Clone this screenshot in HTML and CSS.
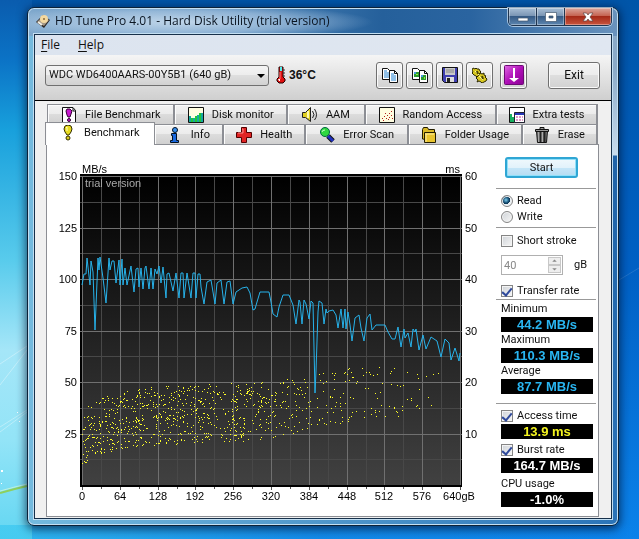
FILE: index.html
```html
<!DOCTYPE html>
<html lang="en">
<head>
<meta charset="utf-8">
<title>HD Tune Pro 4.01 - Hard Disk Utility (trial version)</title>
<link rel="stylesheet" href="styles.css">
</head>
<body>
<svg class="wallpaper" viewBox="0 0 639 539" preserveAspectRatio="none" aria-hidden="true">
  <path d="M0 385L27 350M0 364L27 346M0 427L27 410M0 432L27 412" stroke="#fff" stroke-opacity=".35" fill="none"/>
  <path d="M0 493Q14 489 27 486" stroke="#8ed05c" stroke-width="2" fill="none"/>
  <path d="M0 491Q14 487 27 484" stroke="#e9ffd0" stroke-opacity=".6" fill="none"/>
  <path d="M1 470h2v2h-2zM17 412h1v1h-1zM1 483h1v1h-1zM19 421h1v1h-1z" fill="#fff"/>
  <path d="M619 280L639 268" stroke="#fff" stroke-opacity=".12" fill="none"/>
</svg>
<main class="window">
  <header class="titlebar">
    <svg class="app-icon" width="16" height="16" viewBox="0 0 16 16"><path d="M1 9L8 2l7 5-6 8z" fill="#2b2622"/><path d="M2 9l6-6 6 4-5 6z" fill="#a39787"/><ellipse cx="9" cy="6" rx="4" ry="4" fill="#f4d9a0"/><ellipse cx="9" cy="6" rx="1" ry="1" fill="#8a6a38"/><path d="M3 9l4 3" stroke="#f3eee2" stroke-width="2"/></svg>
    <h1>HD Tune Pro 4.01 - Hard Disk Utility (trial version)</h1>
    <div class="caption">
      <button aria-label="Minimize"><svg width="12" height="12" viewBox="0 0 12 12"><path d="M1 7h10v3H1z" fill="#fff" stroke="#44576e" stroke-width=".7"/></svg></button>
      <button aria-label="Maximize"><svg width="12" height="12" viewBox="0 0 12 12"><path d="M.5 1.500h11v9H.5zM4 5v2h4V5z" fill="#fff" fill-rule="evenodd" stroke="#44576e" stroke-width=".7"/></svg></button>
      <button class="close" aria-label="Close"><svg width="12" height="12" viewBox="0 0 12 12"><path d="M1 2h3.500L6 4l1.500-2H11L8 6l3 4H7.500L6 8l-1.500 2H1l3-4z" fill="#fff" stroke="#5b4545" stroke-width=".7"/></svg></button>
    </div>
  </header>
  <div class="client">
    <nav class="menubar"><button><u>F</u>ile</button><button><u>H</u>elp</button></nav>
    <div class="toolbar">
      <div class="drive">
        <select aria-label="Drive"><option>WDC WD6400AARS-00Y5B1 (640 gB)</option></select>
        <svg class="arrow" width="8" height="4" viewBox="0 0 8 4"><path d="M0 0h8L4 4z"/></svg>
      </div>
      <svg class="thermo" width="10" height="18" viewBox="0 0 10 18"><path d="M3 1h4v10l2 2v2l-2 2H3l-2-2v-2l2-2z" fill="#e01010" stroke="#200" /><path d="M4 1h2v4H4z" fill="#5ee"/><path d="M4 6v7" stroke="#ff8080"/><path d="M2 13h2v2H3z" fill="#fff"/><path d="M7 4h2M7 7h2M7 10h2" stroke="#333"/></svg>
      <output class="temp">36°C</output>
      <div class="tools">
        <button aria-label="Copy text"><svg width="16" height="16" viewBox="0 0 16 16"><g stroke="#111" fill="#fff"><path d="M.5 1.500h5l3 3v8h-8z"/><path d="M7.500 3.500h5l3 3v9h-8z"/><path d="M12.500 3.500v3h3" fill="none"/></g><path d="M2 4h3M2 6h5M2 8h5M2 10h5M9 7h3M9 9h5M9 11h5M9 13h5" stroke="#2080d0"/></svg></button>
        <button aria-label="Copy image"><svg width="16" height="16" viewBox="0 0 16 16"><g stroke="#111" fill="#fff"><path d="M.5 1.500h5l3 3v8h-8z"/><path d="M7.500 3.500h5l3 3v9h-8z"/><path d="M12.500 3.500v3h3" fill="none"/></g><path d="M2 5h5v5H2zM9 8h5v5H9z" fill="#2a9a30"/><path d="M2 5h2v2H2zM9 8h2v2H9z" fill="#4c9be0"/><path d="M4 7h2v1H4zM12 10h1v2h-1z" fill="#9e4"/></svg></button>
        <button aria-label="Save"><svg width="16" height="16" viewBox="0 0 16 16"><path d="M.5.5h15v15h-13l-2-2z" fill="#3f3fb0" stroke="#111"/><path d="M3 1h10v7H3z" fill="#c9c9c9"/><path d="M4 3h8M4 5h8" stroke="#888"/><path d="M4 10h8v5H4z" fill="#ddd"/><path d="M5 11h3v4H5z" fill="#222"/></svg></button>
        <button aria-label="Options"><svg width="16" height="16" viewBox="0 0 16 16"><g fill="#d8c820" stroke="#2b2700"><path d="M1 1l2 1 1-1 1 1h2l1 2 1 1-1 1v2l-2 1-1 1-1-1-2-1-2-2 1-1-1-2z"/><path d="M8 6l2 1 2-1v2l2 1-1 1 2 2-1 2-2 1-2 1-1-1-2-1-2 1 1-2-2-2 2-2z"/></g><path d="M3 4l4 4M7 9l4 4" stroke="#fff8a0" fill="none"/><path d="M5 4l1 3M10 9l1 3" stroke="#4c4500" stroke-width="2"/></svg></button>
        <button class="down" aria-label="Download"><svg width="20" height="20" viewBox="0 0 20 20"><defs><linearGradient id="mag" x1="0" y1="0" x2="1" y2="1"><stop offset="0" stop-color="#e06ae4"/><stop offset=".5" stop-color="#b010b8"/><stop offset="1" stop-color="#8a0094"/></linearGradient></defs><rect x=".5" y=".5" width="19" height="19" rx="1" fill="url(#mag)" stroke="#6c0a74"/><path d="M9 3h2v10h4l-5 4-5-4h4z" fill="#fff"/></svg></button>
      </div>
      <button class="exit">Exit</button>
    </div>
    <div class="content">
      <nav class="tabs back" aria-label="More pages">
        <button class="t-file"><svg viewBox="0 0 16 16"><path d="M1.500.5H12l2.500 3v12h-13z" fill="#fff" stroke="#111"/><path d="M12 1v3h3" fill="none" stroke="#111"/><path d="M5 4l1-2h3l2 2-1 3-1 3H7L6 8z" fill="#c818d0" stroke="#303"/><circle cx="8" cy="13" r="1.500" fill="#c818d0" stroke="#303"/></svg>File Benchmark</button>
        <button class="t-disk"><svg viewBox="0 0 16 16"><path d="M.5.5h15v15H.5z" fill="#fffde0" stroke="#111"/><path d="M1 9h2v6H1zM5 11h2v4H5zM9 8h2v7H9zM13 6h2v9h-2z" fill="#18a8a0"/><path d="M3 11h2v4H3zM7 9h2v6H7zM11 6h2v9h-2z" fill="#20c838"/></svg>Disk monitor</button>
        <button class="t-aam"><svg viewBox="0 0 16 16"><path d="M.5 5.500h3L8.500.5v14l-5-4h-3z" fill="#e0cf20" stroke="#222"/><path d="M6 4v7" stroke="#fffab0" stroke-width="2"/><path d="M10.500 4q3 4 0 7M12.500 2q4 6 0 11" fill="none" stroke="#222"/></svg>AAM</button>
        <button class="t-random"><svg viewBox="0 0 16 16"><path d="M.5.5h15v15H.5z" fill="#fffde0" stroke="#111"/><path d="M3 11h1v1H3zM5 9h1v1H5zM4 13h1v1H4zM7 11h1v1H7zM8 8h1v1H8zM10 6h1v1h-1zM12 4h1v1h-1zM10 10h1v1h-1zM12 8h1v1h-1zM13 11h1v1h-1zM6 6h1v1H6zM9 12h1v1H9z" fill="#b02020"/></svg>Random Access</button>
        <button class="t-extra"><svg viewBox="0 0 16 16"><path d="M.5.5h15v15H.5z" fill="#fff" stroke="#111"/><path d="M1 7h2v8H1zM3 10h3v5H3z" fill="#18b060"/><path d="M5.500 5.500h10v10h-10z" fill="#fff" stroke="#223"/><path d="M6 6h9v2H6z" fill="#2838b8"/><path d="M7 10h2M10 10h2M13 10h1M7 13h2M10 13h2M13 13h1" stroke="#c03090"/></svg>Extra tests</button>
      </nav>
      <nav class="tabs front" aria-label="Pages">
        <button class="t-bench active" aria-current="page"><svg viewBox="0 0 16 16"><path d="M5 1l3-1 3 1 1 3-1 3-2 3H7L5 7 4 4z" fill="#e8dc20" stroke="#332e00"/><path d="M6 3l1-1v4" stroke="#fffcc0" fill="none"/><circle cx="8" cy="13" r="2" fill="#d8ca20" stroke="#332e00"/></svg>Benchmark</button>
        <button class="t-info"><svg viewBox="0 0 16 16"><circle cx="8" cy="3" r="2.500" fill="#3890f0" stroke="#012"/><path d="M4.500 6.500h5v7h2v2h-8v-2h2v-5h-1z" fill="#1868e0" stroke="#012"/></svg>Info</button>
        <button class="t-health"><svg viewBox="0 0 16 16"><path d="M5.500.5h5v5h5v5h-5v5h-5v-5h-5v-5h5z" fill="#e02424" stroke="#500"/><path d="M6 2h1v4H2" stroke="#ff9090" fill="none"/></svg>Health</button>
        <button class="t-error"><svg viewBox="0 0 16 16"><path d="M9 9l5 5" stroke="#111" stroke-width="5"/><path d="M9 9l5 5" stroke="#2030c0" stroke-width="3"/><circle cx="6" cy="5" r="4.500" fill="#30d840" stroke="#064"/><path d="M3 5q0-2 3-2" stroke="#c8ffc8" fill="none"/></svg>Error Scan</button>
        <button class="t-folder"><svg viewBox="0 0 16 16"><path d="M1.500 12V2.500l1-2h4l1 2h6v11z" fill="#d8b828" stroke="#221c00"/><path d="M3.500 5.500h11v10h-11z" fill="#e8c430" stroke="#221c00"/><path d="M4 7h9M5 7v8" stroke="#fff0a0"/></svg>Folder Usage</button>
        <button class="t-erase"><svg viewBox="0 0 16 16"><path d="M2.500 4h11l-1 11.500h-9z" fill="#777" stroke="#111"/><path d="M5 5v10M8 5v10" stroke="#ddd"/><path d="M6.500 5v10M10.500 5v10" stroke="#222" stroke-width="2"/><path d="M1.500 2.500h13v2h-13zM6 2V.5h4V2" fill="#999" stroke="#111"/></svg>Erase</button>
      </nav>
      <section class="panel">
        <svg class="chart" viewBox="47 160 449 350" role="img" aria-label="Transfer rate and access time by position">
          <defs><linearGradient id="plot" x1="0" y1="0" x2="0" y2="1"><stop offset="0" stop-color="#000"/><stop offset="1" stop-color="#414141"/></linearGradient></defs>
          <path d="M80 174h382v313H80z"/>
          <path d="M83 177h378v308H83z" fill="url(#plot)"/>
          <g id="grid" shape-rendering="crispEdges"></g>
          <path id="dots" fill="#ffff28" shape-rendering="crispEdges"/>
          <polyline class="rate" points="82,285 84,274 86,274 87,258 90,285 91,261 93,272 95,330 98,258 99,270 100,257 103,278 106,303 109,258 110,270 112,261 114,261 116,283 119,260 120,285 122,259 123,285 125,268 127,285 131,266 134,292 136,269 138,268 139,287 141,268 143,289 145,268 146,266 149,289 151,268 153,289 155,269 157,274 159,266 161,283 163,267 166,298 167,274 169,273 173,291 176,273 179,298 181,273 183,273 184,298 187,273 191,298 193,273 195,273 196,298 198,274 200,274 201,287 204,304 207,282 211,280 215,304 217,283 221,280 224,304 227,282 230,281 233,304 236,292 242,288 247,287 250,293 253,310 255,309 257,302 260,292 269,292 271,302 273,314 277,317 279,307 283,295 289,295 293,305 296,324 299,300 300,302 302,324 304,300 306,304 309,319 311,301 313,303 315,393 316,371 318,312 319,301 322,303 324,324 326,309 327,313 329,311 333,310 336,315 338,328 341,309 343,328 345,309 346,329 348,312 350,325 352,341 355,318 359,315 361,328 364,341 367,318 370,314 372,330 376,325 385,325 388,332 392,339 395,339 398,327 401,347 404,329 405,338 408,333 411,347 413,329 415,332 416,329 419,350 423,335 426,349 431,337 437,341 441,357 445,339 449,343 451,360 455,348 459,361 460,353"/>
          <text class="mark" x="85" y="187">trial version</text>
          <text x="82" y="173">MB/s</text>
          <text x="460" y="173" text-anchor="end">ms</text>
          <g id="labels"></g>
        </svg>
        <form class="side">
          <button class="start" type="button">Start</button>
          <fieldset class="modes">
            <label class="check"><input type="radio" name="mode" checked>Read</label>
            <label class="check"><input type="radio" name="mode">Write</label>
          </fieldset>
          <div class="options">
            <label class="check"><input type="checkbox">Short stroke</label>
            <div class="size">
              <input id="size" type="text" value="40" disabled>
              <span class="spin"><svg viewBox="0 0 14 8"><path d="M4 5h6L7 2z"/></svg><svg viewBox="0 0 14 8"><path d="M4 3h6L7 6z"/></svg></span>
              <label for="size">gB</label>
            </div>
            <label class="check"><input type="checkbox" checked>Transfer rate</label>
          </div>
          <div class="results">
            <label for="min">Minimum</label><output id="min">44.2 MB/s</output>
            <label for="max">Maximum</label><output id="max">110.3 MB/s</output>
            <label for="avg">Average</label><output id="avg">87.7 MB/s</output>
          </div>
          <div class="results extra">
            <label class="check"><input type="checkbox" checked>Access time</label><output class="access">13.9 ms</output>
            <label class="check"><input type="checkbox" checked>Burst rate</label><output class="plain">164.7 MB/s</output>
            <label for="cpu">CPU usage</label><output id="cpu" class="plain">-1.0%</output>
          </div>
        </form>
      </section>
    </div>
  </div>
</main>
<script src="chart.js"></script>
</body>
</html>
```
FILE: styles.css
```css
* { box-sizing: border-box; }
body {
  margin: 0;
  min-height: 100vh;
  padding: 7px 20px 13px 27px;
  font: 12px/16px "Liberation Sans", sans-serif;
  color: #111;
  background:
    linear-gradient(90deg, rgba(60, 200, 240, .75), rgba(30, 150, 230, .4) 50%, transparent) 0 100% / 100% 14px no-repeat,
    linear-gradient(180deg, #0a5cae 0, #0b73c6 60px, #18a0dc 130px, #58cbec 260px, #a5e6f8 350px, #93e4f7 440px, #62d6f2 100%) 0 0 / 32px 100% no-repeat,
    linear-gradient(180deg, #0055a8, #0060c4 50%, #0b82ea);
  background-attachment: fixed;
}
.wallpaper { position: fixed; inset: 0; width: 100%; height: 100%; z-index: -1; }
button { font: inherit; color: inherit; margin: 0; padding: 0; border: 0; background: none; }
fieldset { margin: 0; padding: 0; border: 0; min-width: 0; }

.window {
  display: flex;
  flex-direction: column;
  border: 1px solid #0c2238;
  border-radius: 7px;
  padding: 0 6px 6px;
  box-shadow: inset 0 0 0 1px #c3dff2, 0 2px 10px 1px rgba(0, 15, 45, .7);
  background:
    radial-gradient(ellipse 190px 18px at 155px 14px, rgba(225, 237, 248, .75), rgba(200, 220, 240, .5) 60%, transparent) 0 0 / 100% 28px no-repeat,
    linear-gradient(90deg, #7fa8cc, #4f86b8 35%, #25609b 60%, #2a64a0 75%, #6a93bd) 0 0 / 100% 28px no-repeat,
    linear-gradient(180deg, #8aaac8 0 60px, #c8dced 147px, #1f63a8 148px, #2b74b8) 100% 0 / 8px 100% no-repeat,
    linear-gradient(90deg, #74bade, #2b74b8);
}
.titlebar { display: flex; align-items: center; height: 26px; }
.app-icon { flex: none; margin-right: 4px; margin-left: 1px; }
.titlebar h1 {
  flex: 1;
  margin: 0;
  font: 12px/16px "Open Sans", sans-serif;
  color: #0a1522;
  white-space: nowrap;
}
.caption {
  display: flex;
  align-self: flex-start;
  height: 18px;
  border: 1px solid #20354f;
  border-top: 0;
  border-radius: 0 0 5px 5px;
  overflow: hidden;
  box-shadow: 0 0 0 1px rgba(210, 228, 245, .7);
}
.caption button {
  display: grid;
  place-items: center;
  width: 28px;
  border-right: 1px solid #20354f;
  background: linear-gradient(#a9bfd6, #7893b2 48%, #365b86 50%, #5d86b0);
  box-shadow: inset 0 0 0 1px rgba(255, 255, 255, .35);
}
.caption .close {
  width: 46px;
  border: 0;
  background: linear-gradient(#dba79c, #c4604e 48%, #a52a18 50%, #c9553e);
}

.client {
  flex: 1;
  display: flex;
  flex-direction: column;
  border: 1px solid #17304a;
  box-shadow: 0 0 0 1px #c3dff2;
  background: #f0f0f0;
}
.menubar {
  display: flex;
  gap: 18px;
  height: 20px;
  padding-left: 6px;
  background: linear-gradient(90deg, #dce4ef, #e0e7f1);
  font: 12px/20px "Open Sans", sans-serif;
}
.menubar u { text-underline-offset: 2px; }
.toolbar {
  display: flex;
  align-items: center;
  height: 46px;
  padding: 0 11px 5px 10px;
  border-bottom: 1px solid #000;
  background: linear-gradient(#f5f5f5, #cfcfcf);
}
.drive { position: relative; }
.drive select {
  appearance: none;
  width: 224px;
  height: 21px;
  padding: 0 20px 0 3px;
  border: 1px solid #707070;
  border-radius: 3px;
  font: 11px/16px Roboto, sans-serif;
  color: #111;
  background: linear-gradient(#f4f4f4, #ececec 50%, #dedede 50%, #d2d2d2);
}
.arrow { position: absolute; right: 4px; top: 9px; pointer-events: none; }
.thermo { margin: 0 3px 0 7px; }
.temp { font-weight: bold; font-size: 12px; }
.tools { display: flex; gap: 3px; margin-left: auto; }
.tools button, .exit {
  display: grid;
  place-items: center;
  width: 27px;
  height: 27px;
  border: 1px solid #707070;
  border-radius: 3px;
  background: linear-gradient(#f4f4f4, #ececec 50%, #dedede 50%, #d2d2d2);
  box-shadow: inset 0 0 0 1px #fafafa;
}
.tools .down { margin-left: 4px; }
.exit { width: 52px; margin-left: 21px; font: 12px/16px Roboto, sans-serif; }

.content { flex: 1; padding: 3px 12px 1px 11px; font: 11px/16px Roboto, sans-serif; }
.tabs { display: flex; height: 20px; padding: 0 1px; }
.tabs button {
  display: flex;
  align-items: center;
  justify-content: center;
  gap: 8px;
  min-width: 0;
  white-space: nowrap;
  border: solid #8c8e94;
  border-width: 1px 2px 0 0;
  background: linear-gradient(#f2f2f2, #ebebeb 50%, #dcdcdc 50%, #d0d0d0);
  box-shadow: inset 1px 1px 0 #fcfcfc;
}
.tabs button:first-child { border-left-width: 1px; }
.tabs svg { flex: none; width: 16px; height: 16px; }
.t-file { flex: 128; }
.t-disk { flex: 113; }
.t-aam { flex: 77; }
.t-random { flex: 132; }
.t-extra { flex: 101; }
.t-bench { flex: 110; }
.t-info { flex: 69; }
.t-health { flex: 82; }
.t-error { flex: 103; }
.t-folder { flex: 114; }
.t-erase { flex: 75; }
.tabs .active {
  align-self: flex-end;
  height: 23px;
  margin: 0 0 -1px -2px;
  padding-bottom: 3px;
  border-right-width: 1px;
  background: #fff;
  z-index: 1;
}

.panel {
  display: flex;
  align-items: flex-start;
  border: 1px solid #8c8e94;
  background: #fff;
}
.chart { flex: 1; min-width: 0; margin-top: 15px; font: 11px "Liberation Sans", sans-serif; }
.chart .mark { fill: #a8a8a8; }
.rate { fill: none; stroke: #27b2ea; stroke-width: 1; }
.side { width: 102px; padding: 12px 2px 9px 0; }
.start {
  display: block;
  width: 73px;
  height: 21px;
  margin: 0 0 10px 9px;
  border: 2px solid #2fa6d4;
  border-radius: 3px;
  background: linear-gradient(#f0f8fc, #e2f2fb 50%, #c6e6f8 50%, #b6dcf2);
  box-shadow: inset 0 0 0 1px #8fe0fa;
}
.modes, .options, .results { border-top: 1px solid #999; padding-left: 5px; }
.modes { padding-top: 4px; padding-bottom: 2px; }
.options { padding-top: 5px; }
.check { display: flex; align-items: center; gap: 4px; height: 16px; white-space: nowrap; }
.check input {
  appearance: none;
  display: grid;
  place-items: center;
  flex: none;
  width: 12px;
  height: 12px;
  margin: 0;
  border: 1px solid #858585;
  background: linear-gradient(135deg, #cfd3d8, #f6f6f6);
  box-shadow: inset 0 0 0 1px #f4f4f4;
}
.check input[type="radio"] { border-radius: 50%; }
.check input[type="radio"]:checked { background: radial-gradient(circle at 40% 40%, #7fd0f0, #12496e 3px, #0c3350 4px, #e6eef4 4px); }
.check input[type="checkbox"]:checked::before {
  content: "";
  width: 4px;
  height: 8px;
  margin-bottom: 2px;
  border: solid #2f4a9c;
  border-width: 0 2px 2px 0;
  rotate: 40deg;
}
.size { display: flex; align-items: center; height: 20px; margin: 6px 0 8px; }
.size input {
  width: 46px;
  height: 20px;
  padding: 0 2px;
  border: 1px solid #b0b0b0;
  border-right: 0;
  background: #fff;
  color: #888;
  font: inherit;
}
.spin { display: flex; flex-direction: column; width: 16px; height: 20px; padding: 1px; border: 1px solid #b0b0b0; border-left: 0; }
.spin svg { flex: 1; min-height: 0; border: 1px solid #c8c8c8; background: #eee; fill: #888; }
.size label { margin-left: 11px; }
.results { display: flex; flex-direction: column; padding-top: 1px; padding-right: 3px; padding-bottom: 9px; }
.results output {
  height: 15px;
  background: #000;
  color: #29b6f2;
  font: bold 13px/15px "Liberation Sans", sans-serif;
  text-align: center;
}
.extra { padding-top: 4px; padding-bottom: 0; }
.extra output:not(:last-child) { margin-bottom: 3px; }
.results .access { color: #f4f420; }
.results .plain { color: #fff; }
```
FILE: chart.js
```js
const NS = "http://www.w3.org/2000/svg";
const left = 82, right = 460, top0 = 176, bottom = 485;
const grid = document.getElementById("grid");
const labels = document.getElementById("labels");

function path(d, stroke) {
  const p = document.createElementNS(NS, "path");
  p.setAttribute("d", d);
  p.setAttribute("stroke", stroke);
  grid.append(p);
}
function label(x, y, text, anchor) {
  const t = document.createElementNS(NS, "text");
  t.setAttribute("x", x);
  t.setAttribute("y", y);
  t.setAttribute("text-anchor", anchor);
  t.textContent = text;
  labels.append(t);
}

// Minor lines first so that major lines cross over them.
for (const major of [false, true]) {
  const color = major ? "#707070" : "#484848";
  for (let i = major ? 0 : 1; i <= 20; i += 2) {
    const x = Math.round(left + (right - left) * i / 20) + 0.5;
    path(`M${x} ${top0}V${bottom}`, color);
    path(`M${x} 487v${major ? 3 : 2}`, "#555");
  }
  for (let i = major ? 0 : 1; i < 12; i += 2) {
    const y = Math.round(top0 + (bottom - top0) * i / 12) + 0.5;
    path(`M80 ${y}H462`, color);
  }
}
for (let i = 0; i < 6; i++) {
  const y = Math.round(top0 + (bottom - top0) * i / 6) + 4;
  label(77, y, 150 - i * 25, "end");
  label(465, y, 60 - i * 10, "start");
}
for (let i = 0; i < 10; i++) label(Math.round(left + 37.8 * i), 500, i * 64, "middle");
label(459, 500, "640gB", "middle");

// Access-time samples: [x, highest y, lowest y, samples per pixel].
const envelope = [
  [82, 420, 474, 4], [88, 405, 458, 4], [100, 399, 454, 4], [119, 392, 449, 4],
  [157, 386, 445, 4], [195, 384, 443, 3.8], [250, 382, 441, 3.2], [271, 379, 438, 2.4],
  [308, 374, 430, 1.5], [350, 368, 422, 1.1], [400, 364, 418, 0.7], [442, 368, 400, 0.2]
];
let seed = 6400;
function random() {
  seed = (seed * 1664525 + 1013904223) % 4294967296;
  return seed / 4294967296;
}
let d = "";
for (let i = 1; i < envelope.length; i++) {
  const a = envelope[i - 1], b = envelope[i];
  const count = Math.round((b[0] - a[0]) * (a[3] + b[3]) / 2);
  for (let n = 0; n < count; n++) {
    const t = random();
    const hi = a[1] + (b[1] - a[1]) * t;
    const lo = a[2] + (b[2] - a[2]) * t;
    const x = Math.round(a[0] + (b[0] - a[0]) * t);
    const y = Math.round(hi + (lo - hi) * random());
    d += `M${x} ${y}h1v1h-1z`;
  }
}
document.getElementById("dots").setAttribute("d", d);
```
